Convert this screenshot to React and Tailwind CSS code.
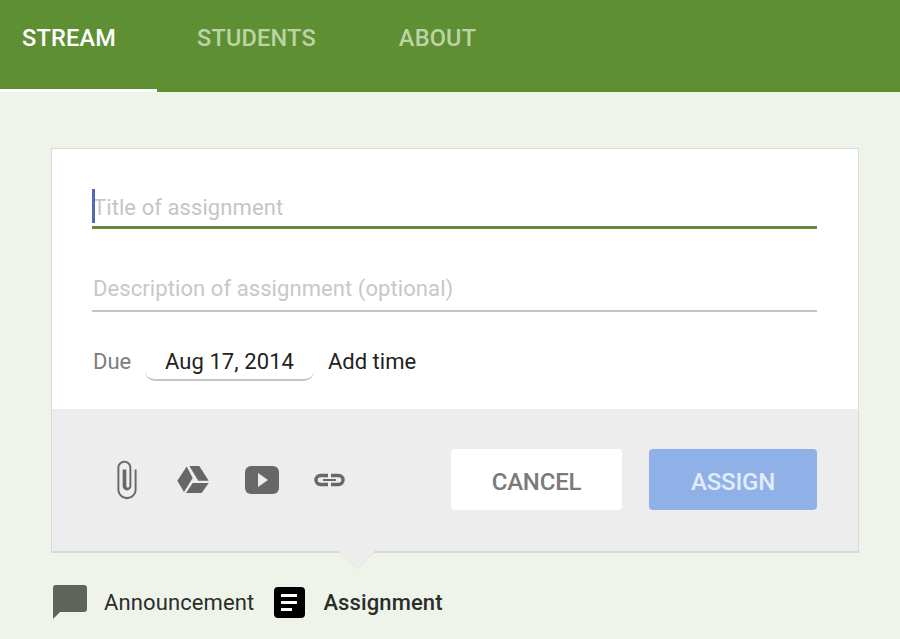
import React from "react";

const roboto = { fontFamily: "Roboto, sans-serif" };

function PaperclipIcon() {
  return (
    <svg width="22" height="40" viewBox="6.5 0.5 12 23" className="fill-[#666866]">
      <path d="M16.9 6v11.5c0 2.4-1.9 4.3-4.4 4.3s-4.4-1.9-4.4-4.3V5c0-1.6 1.3-2.9 2.9-2.9s2.9 1.3 2.9 2.9v10.5c0 .5-.3.9-.9.9s-.9-.4-.9-.9V6H10v9.5c0 1.4 1.1 2.5 2.5 2.5s2.5-1.1 2.5-2.5V5c0-2.2-1.8-4-4-4S7 2.8 7 5v12.5c0 3 2.5 5.5 5.5 5.5s5.5-2.5 5.5-5.5V6h-1.1z" />
    </svg>
  );
}

function DriveIcon() {
  return (
    <svg width="32" height="28" viewBox="0 0 32 28" className="fill-[#666866]">
      <path d="M9.7 0.4l6 11.6L7 26 0.3 14.7z" />
      <path d="M12.3 0h10l9.4 14.7H21.3z" />
      <path d="M15.7 17h16l-7 10H9z" />
    </svg>
  );
}

function YoutubeIcon() {
  return (
    <svg width="34" height="28" viewBox="0 0 34 28">
      <rect width="34" height="28" rx="6" className="fill-[#666866]" />
      <path d="M13 7l10 7-10 7z" className="fill-[#ededed]" />
    </svg>
  );
}

function LinkIcon() {
  return (
    <svg width="31" height="14" viewBox="0 0 31 14" fill="none" className="stroke-[#666866]">
      <path d="M14 2.5H6.5a4.5 4.5 0 0 0 0 9H14" strokeWidth="3.4" />
      <path d="M17 2.5h7.500a4.500 4.500 0 0 1 0 9H17" strokeWidth="3.4" />
      <path d="M9 7h13" strokeWidth="2" />
    </svg>
  );
}

function CommentIcon() {
  return (
    <svg width="34" height="34" viewBox="0 0 34 34" className="fill-[#5f635c]">
      <path d="M3 0h28a3 3 0 0 1 3 3v21a3 3 0 0 1-3 3H7l-7 7V3a3 3 0 0 1 3-3z" />
    </svg>
  );
}

function AssignmentIcon() {
  return (
    <svg width="31" height="31" viewBox="0 0 31 31">
      <rect width="31" height="31" rx="4" className="fill-black" />
      <path d="M7 7h16v3H7zM7 14h16v3H7zM7 21h11v3H7z" className="fill-white" />
    </svg>
  );
}

export default function App() {
  return (
    <div className="w-[900px] h-[639px] overflow-hidden bg-[#eff4eb]" style={roboto}>
      {/* Tabs */}
      <div className="h-[92px] bg-[#5f8f33] flex text-[23.5px] font-medium tracking-[0.2px]">
        <div className="w-[157px] h-full pl-[22px] pt-[21px] border-b-[3px] border-white text-white">STREAM</div>
        <div className="pl-[40px] pr-[42px] pt-[21px] text-[#bcd4a5]">STUDENTS</div>
        <div className="px-[41px] pt-[21px] text-[#bcd4a5]">ABOUT</div>
      </div>

      {/* Card */}
      <div className="relative mt-[56px] ml-[51px] w-[808px] border border-b-2 border-[#d8dbd5] bg-white tracking-[0.08px]">
        <div className="h-[260px] pt-[40px] pl-[40px] pr-[41px]">
          <div className="relative h-[40px] border-b-[3px] border-[#648c3e] text-[22px] leading-[38px] text-[#c4c6c6]">
            <div className="absolute left-0 top-0 w-[3px] h-[34px] bg-[#4f69bb]" />
            <div className="pl-px">Title of assignment</div>
          </div>
          <div className="mt-[41px] h-[42px] border-b-2 border-[#c4c4c4] pl-px text-[22px] leading-[38px] text-[#c6c8c8]">
            Description of assignment (optional)
          </div>
          <div className="mt-[31px] flex items-start pl-px text-[22px] leading-[38px]">
            <span className="w-[52px] tracking-normal text-[#7d7d7d]">Due</span>
            <span className="w-[169px] h-[38px] text-center text-[#222222] border-b-2 border-[#c4c4c4] rounded-b-[10px]">
              Aug 17, 2014
            </span>
            <span className="ml-[14px] tracking-normal text-[#222222]">Add time</span>
          </div>
        </div>
        <div className="h-[142px] bg-[#ededed] flex items-center pl-[64px] pb-[1px]">
          <div className="flex items-center w-[335px]">
            <div className="w-[61px]"><PaperclipIcon /></div>
            <div className="w-[68px]"><DriveIcon /></div>
            <div className="w-[69px]"><YoutubeIcon /></div>
            <LinkIcon />
          </div>
          <div className="w-[171px] h-[61px] rounded-[4px] bg-white flex items-center justify-center pt-[4px] text-[24px] font-medium tracking-[-0.2px] text-[#7a7a7a]">
            CANCEL
          </div>
          <div className="ml-[27px] w-[168px] h-[61px] rounded-[4px] bg-[#8fb1e8] flex items-center justify-center pt-[4px] text-[24px] font-medium tracking-[-0.2px] text-[#e4ecf8]">
            ASSIGN
          </div>
        </div>
        {/* Pointer under the active type */}
        <svg width="38" height="20" viewBox="0 0 38 20" className="absolute left-[286px] -bottom-[19px]">
          <path d="M0 0h38L19 19z" className="fill-[#ededed]" />
          <path d="M0 0l19 19L38 0" fill="none" className="stroke-[#e2e5df]" strokeWidth="1" />
        </svg>
      </div>

      {/* Post type row */}
      <div className="mt-[32px] ml-[53px] flex items-center text-[22px] tracking-[0.12px] text-[#2b2d2b]">
        <CommentIcon />
        <span className="ml-[17px]">Announcement</span>
        <span className="ml-[20px]"><AssignmentIcon /></span>
        <span className="ml-[18px] font-medium">Assignment</span>
      </div>
    </div>
  );
}
